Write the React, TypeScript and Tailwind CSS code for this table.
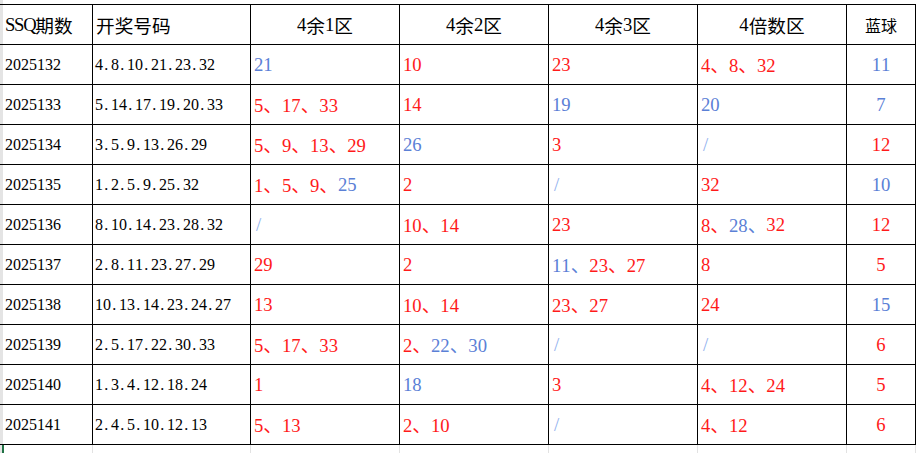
import React from 'react';

type Tone = 'r' | 'b' | 's' | 'k';
type Part = [string, Tone];

interface Row {
  issue: string;
  draw: string;
  zones: Part[][];
  blue: Part;
}

const ROWS: Row[] = [
  { issue: '2025132', draw: '4.8.10.21.23.32', zones: [[['21', 'b']], [['10', 'r']], [['23', 'r']], [['4、8、32', 'r']]], blue: ['11', 'b'] },
  { issue: '2025133', draw: '5.14.17.19.20.33', zones: [[['5、17、33', 'r']], [['14', 'r']], [['19', 'b']], [['20', 'b']]], blue: ['7', 'b'] },
  { issue: '2025134', draw: '3.5.9.13.26.29', zones: [[['5、9、13、29', 'r']], [['26', 'b']], [['3', 'r']], [['/', 's']]], blue: ['12', 'r'] },
  { issue: '2025135', draw: '1.2.5.9.25.32', zones: [[['1、5、9、', 'r'], ['25', 'b']], [['2', 'r']], [['/', 's']], [['32', 'r']]], blue: ['10', 'b'] },
  { issue: '2025136', draw: '8.10.14.23.28.32', zones: [[['/', 's']], [['10、14', 'r']], [['23', 'r']], [['8、', 'r'], ['28、', 'b'], ['32', 'r']]], blue: ['12', 'r'] },
  { issue: '2025137', draw: '2.8.11.23.27.29', zones: [[['29', 'r']], [['2', 'r']], [['11、', 'b'], ['23、27', 'r']], [['8', 'r']]], blue: ['5', 'r'] },
  { issue: '2025138', draw: '10.13.14.23.24.27', zones: [[['13', 'r']], [['10、14', 'r']], [['23、27', 'r']], [['24', 'r']]], blue: ['15', 'b'] },
  { issue: '2025139', draw: '2.5.17.22.30.33', zones: [[['5、17、33', 'r']], [['2、', 'r'], ['22、30', 'b']], [['/', 's']], [['/', 's']]], blue: ['6', 'r'] },
  { issue: '2025140', draw: '1.3.4.12.18.24', zones: [[['1', 'r']], [['18', 'b']], [['3', 'r']], [['4、12、24', 'r']]], blue: ['5', 'r'] },
  { issue: '2025141', draw: '2.4.5.10.12.13', zones: [[['5、13', 'r']], [['2、10', 'r']], [['/', 's']], [['4、12', 'r']]], blue: ['6', 'r'] },
];

const toneClass: Record<Tone, string> = {
  r: 'text-[#ff1a1a]',
  b: 'text-[#5b80d6]',
  s: 'text-[#8fb0ee]',
  k: 'text-black',
};

// SimSun-like look: digits and punctuation sit in half-em cells, CJK glyphs take a full em
const Txt: React.FC<{ text: string }> = ({ text }) => (
  <>
    {Array.from(text).map((ch, i) => {
      if (ch.charCodeAt(0) >= 128) {
        return (
          <span key={i} className="[font-family:Noto_Sans_CJK_SC,sans-serif]">
            {ch}
          </span>
        );
      }
      if (/[A-Za-z]/.test(ch)) {
        return (
          <span key={i} className="[font-family:Liberation_Serif,serif] tracking-[-0.07em]">
            {ch}
          </span>
        );
      }
      return (
        <span
          key={i}
          className={`inline-block w-[0.5em] [font-family:Liberation_Serif,serif] ${ch === '.' ? 'text-left pl-[0.08em]' : 'text-center'}`}
        >
          {ch}
        </span>
      );
    })}
  </>
);

const firstCol = 'bg-[linear-gradient(to_right,#e4e4e4_3px,#ffffff_3px)]';

export default function App() {
  return (
    <div className="w-[921px] h-[453px] bg-[linear-gradient(to_right,#e4e4e4_3px,#ffffff_3px)] pt-[4px] overflow-hidden">
      <div className="w-[916px] grid grid-cols-[92px_157px_148px_148px_148px_148px_68px] auto-rows-[39px] gap-px bg-black pt-px pr-px pb-px">
        {/* header */}
        <div className={`${firstCol} flex items-center pl-[5px] text-[18.67px] text-black whitespace-nowrap`}>
          <Txt text="SSQ期数" />
        </div>
        <div className="bg-white flex items-center pl-[3px] text-[18.67px] text-black">
          <Txt text="开奖号码" />
        </div>
        {['4余1区', '4余2区', '4余3区', '4倍数区'].map((h) => (
          <div key={h} className="bg-white flex items-center justify-center text-[18.67px] text-black">
            <Txt text={h} />
          </div>
        ))}
        <div className="bg-white flex items-center justify-center text-[16px] text-black">
          <Txt text="蓝球" />
        </div>

        {ROWS.map((row) => (
          <React.Fragment key={row.issue}>
            <div className={`${firstCol} flex items-center pl-[5px] text-[16px] text-black`}>
              <Txt text={row.issue} />
            </div>
            <div className="bg-white flex items-center pl-[2px] text-[16px] text-black">
              <Txt text={row.draw} />
            </div>
            {row.zones.map((parts, zi) => (
              <div key={zi} className="bg-white flex items-center pl-[3px] text-[18.67px] whitespace-nowrap">
                {parts.map(([t, tone], pi) => (
                  <span key={pi} className={toneClass[tone]}>
                    <Txt text={t} />
                  </span>
                ))}
              </div>
            ))}
            <div className={`bg-white flex items-center justify-center text-[18.67px] ${toneClass[row.blue[1]]}`}>
              <Txt text={row.blue[0]} />
            </div>
          </React.Fragment>
        ))}
      </div>

      {/* faint sheet gridlines under the table */}
      <div className="w-[916px] h-[8px] grid grid-cols-[92px_157px_148px_148px_148px_148px_68px] gap-px bg-[#e2e2e2] pr-px">
        <div className={`${firstCol} flex`}>
          <div className="ml-[2px] w-[2px] h-full bg-[#217346]" />
        </div>
        <div className="bg-white" />
        <div className="bg-white" />
        <div className="bg-white" />
        <div className="bg-white" />
        <div className="bg-white" />
        <div className="bg-white" />
      </div>
    </div>
  );
}
